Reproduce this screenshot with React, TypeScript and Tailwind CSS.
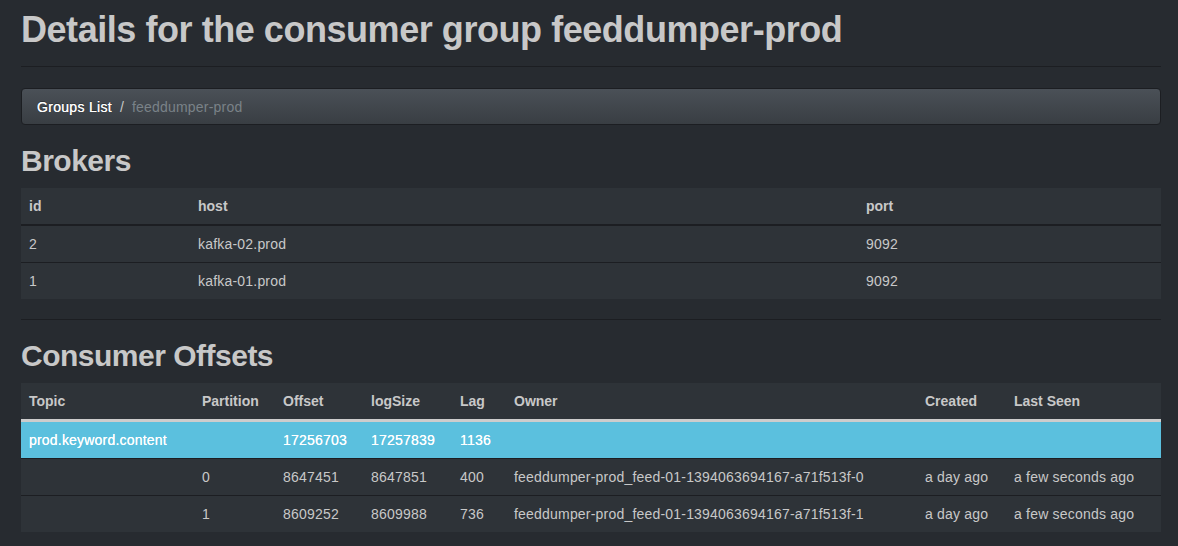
const brokers = [
  { id: "2", host: "kafka-02.prod", port: "9092" },
  { id: "1", host: "kafka-01.prod", port: "9092" },
];

const partitions = [
  {
    partition: "0",
    offset: "8647451",
    logSize: "8647851",
    lag: "400",
    owner: "feeddumper-prod_feed-01-1394063694167-a71f513f-0",
    created: "a day ago",
    lastSeen: "a few seconds ago",
  },
  {
    partition: "1",
    offset: "8609252",
    logSize: "8609988",
    lag: "736",
    owner: "feeddumper-prod_feed-01-1394063694167-a71f513f-1",
    created: "a day ago",
    lastSeen: "a few seconds ago",
  },
];

const offsetCols = [
  { label: "Topic", w: "w-[173px]" },
  { label: "Partition", w: "w-[81px]" },
  { label: "Offset", w: "w-[88px]" },
  { label: "logSize", w: "w-[89px]" },
  { label: "Lag", w: "w-[54px]" },
  { label: "Owner", w: "w-[411px]" },
  { label: "Created", w: "w-[89px]" },
  { label: "Last Seen", w: "w-[155px]" },
];

export default function App() {
  return (
    <div
      className="min-h-[546px] bg-[#272b30] text-[14px] leading-[20px] text-[#c8c8c8] tracking-[0.2px]"
      style={{ fontFamily: '"Liberation Sans", Arial, sans-serif' }}
    >
      <div className="ml-[21px] w-[1140px] pt-[10px]">
        <div className="border-b border-[#1c1e22] pb-[16px]">
          <h1 className="text-[36px] leading-[40px] font-bold text-[#c8c8c8] tracking-[-0.45px]">
            Details for the consumer group feeddumper-prod
          </h1>
        </div>

        <div className="mt-[21px] flex h-[37px] items-center rounded-[4px] border border-[#1c1e22] bg-gradient-to-b from-[#4a5057] to-[#393e43] px-[15px]">
          <span className="text-white tracking-[0.3px] [text-shadow:0_-1px_0_rgba(0,0,0,0.3),0_0_0.4px_#ffffff]">
            Groups List
          </span>
          <span className="px-[8px] text-[#c8c8c8]">/</span>
          <span className="text-[#7a8288]">feeddumper-prod</span>
        </div>

        <h2 className="mt-[19px] text-[30px] leading-[33px] font-bold text-[#c8c8c8] tracking-[-0.5px]">
          Brokers
        </h2>

        <table className="mt-[11px] w-full border-collapse bg-[#2e3338] text-left">
          <thead>
            <tr className="border-b-2 border-[#1c1e22]">
              <th className="w-[169px] p-[8px] font-bold tracking-normal">id</th>
              <th className="w-[668px] p-[8px] font-bold tracking-normal">host</th>
              <th className="p-[8px] font-bold tracking-normal">port</th>
            </tr>
          </thead>
          <tbody>
            {brokers.map((b, i) => (
              <tr key={b.id} className={i > 0 ? "border-t border-[#1c1e22]" : ""}>
                <td className="p-[8px]">{b.id}</td>
                <td className="p-[8px]">{b.host}</td>
                <td className="p-[8px]">{b.port}</td>
              </tr>
            ))}
          </tbody>
        </table>

        <div className="mt-[20px] border-t border-[#1c1e22]"></div>

        <h2 className="mt-[19px] text-[30px] leading-[33px] font-bold text-[#c8c8c8] tracking-[-0.5px]">
          Consumer Offsets
        </h2>

        <table className="mt-[11px] w-full border-collapse bg-[#2e3338] text-left">
          <thead>
            <tr className="border-b-[3px] border-[#cccccc]">
              {offsetCols.map((c) => (
                <th key={c.label} className={`${c.w} p-[8px] font-bold tracking-normal whitespace-nowrap`}>
                  {c.label}
                </th>
              ))}
            </tr>
          </thead>
          <tbody>
            <tr className="bg-[#5bc0de] text-white [text-shadow:0_0_0.4px_#ffffff]">
              <td className="p-[8px]">prod.keyword.content</td>
              <td className="p-[8px]"></td>
              <td className="p-[8px]">17256703</td>
              <td className="p-[8px]">17257839</td>
              <td className="p-[8px]">1136</td>
              <td className="p-[8px]"></td>
              <td className="p-[8px]"></td>
              <td className="p-[8px]"></td>
            </tr>
            {partitions.map((p) => (
              <tr key={p.partition} className="border-t border-[#1c1e22]">
                <td className="p-[8px]"></td>
                <td className="p-[8px]">{p.partition}</td>
                <td className="p-[8px]">{p.offset}</td>
                <td className="p-[8px]">{p.logSize}</td>
                <td className="p-[8px]">{p.lag}</td>
                <td className="p-[8px] whitespace-nowrap">{p.owner}</td>
                <td className="p-[8px] whitespace-nowrap">{p.created}</td>
                <td className="p-[8px] whitespace-nowrap">{p.lastSeen}</td>
              </tr>
            ))}
          </tbody>
        </table>
      </div>
    </div>
  );
}
